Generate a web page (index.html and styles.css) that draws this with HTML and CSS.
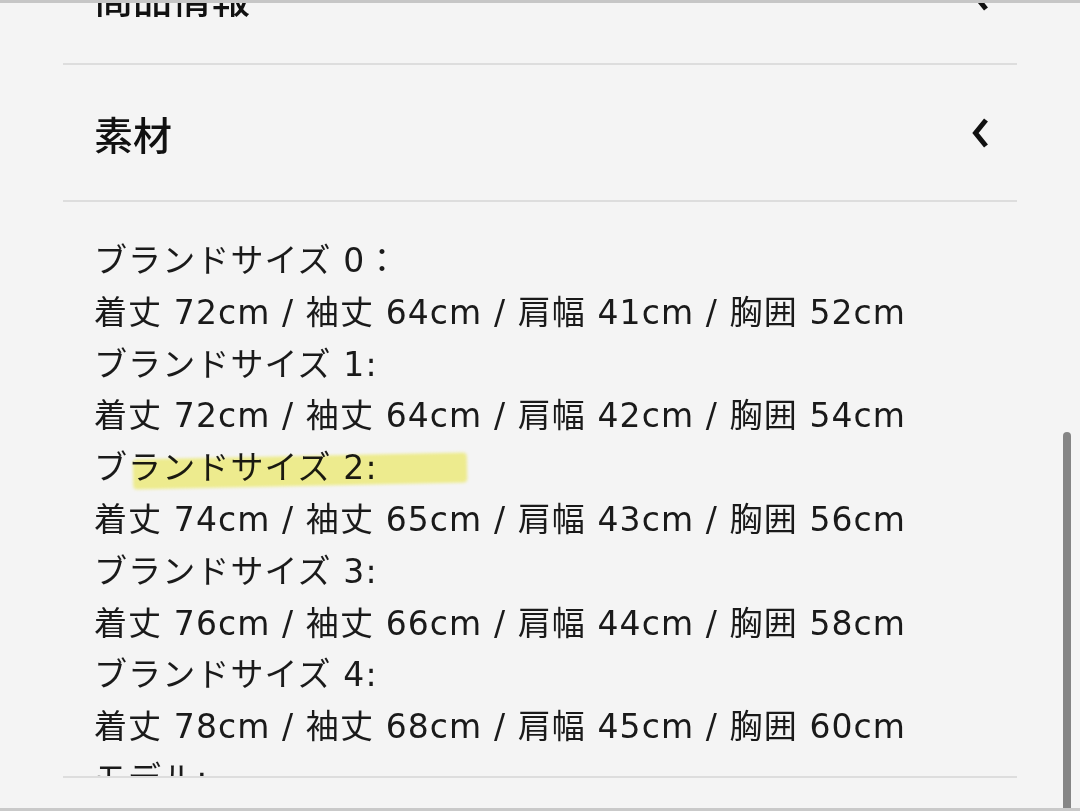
FILE: index.html
```html
<!DOCTYPE html>
<html lang="ja">
<head>
<meta charset="utf-8">
<link rel="stylesheet" href="styles.css">
</head>
<body>
<div class="screen">
  <div class="panel">
    <div class="row row-top">
      <span class="row-title">商品情報</span>
      <svg class="chev" width="18" height="32" viewBox="0 0 18 32"><path d="M14 2 L3.5 15 L14 28" fill="none" stroke="#111" stroke-width="5" stroke-linejoin="miter"/></svg>
    </div>
    <div class="row">
      <span class="row-title">素材</span>
      <svg class="chev" width="18" height="32" viewBox="0 0 18 32"><path d="M14 2 L3.5 15 L14 28" fill="none" stroke="#111" stroke-width="5" stroke-linejoin="miter"/></svg>
    </div>
    <div class="content">
      <div class="text">
        <p>ブランドサイズ 0：</p>
        <p>着丈 72cm / 袖丈 64cm / 肩幅 41cm / 胸囲 52cm</p>
        <p>ブランドサイズ 1:</p>
        <p>着丈 72cm / 袖丈 64cm / 肩幅 42cm / 胸囲 54cm</p>
        <p class="hl-line">ブランドサイズ 2:<span class="marker"></span></p>
        <p>着丈 74cm / 袖丈 65cm / 肩幅 43cm / 胸囲 56cm</p>
        <p>ブランドサイズ 3:</p>
        <p>着丈 76cm / 袖丈 66cm / 肩幅 44cm / 胸囲 58cm</p>
        <p>ブランドサイズ 4:</p>
        <p>着丈 78cm / 袖丈 68cm / 肩幅 45cm / 胸囲 60cm</p>
        <p>モデル:</p>
      </div>
    </div>
    <div class="divider"></div>
    <div class="foot"></div>
  </div>
  <div class="scrollbar"></div>
</div>
</body>
</html>
```
FILE: styles.css
```css
* { box-sizing: border-box; }
html, body { margin: 0; padding: 0; }
body {
  width: 1080px;
  height: 811px;
  overflow: hidden;
  background: #f4f4f4;
  font-family: "DejaVu Sans", "Noto Sans CJK JP", sans-serif;
  color: #1a1a1a;
}
.screen {
  position: relative;
  width: 1080px;
  height: 811px;
  border-top: 3px solid #c6c6c6;
  border-bottom: 3px solid #c9c9c9;
  overflow: hidden;
}
.panel {
  margin: -75px 63px 0;
  display: flex;
  flex-direction: column;
}
.row {
  height: 137px;
  border-bottom: 2px solid #dddddd;
  display: flex;
  align-items: center;
  justify-content: space-between;
  padding: 0 27px 0 31px;
}
.row-title {
  font-family: "Noto Sans CJK JP", sans-serif;
  font-size: 39px;
  font-weight: 500;
  color: #111;
}
.chev { display: block; margin-top: 2px; }
.content {
  height: 574px;
  overflow: hidden;
  padding: 33px 0 0 31px;
}
.text p {
  margin: 0;
  font-size: 33px;
  letter-spacing: 1.1px;
  line-height: 51.8px;
  white-space: nowrap;
  position: relative;
}
.hl-line .marker {
  position: absolute;
  left: 39px;
  top: 14px;
  width: 334px;
  height: 30px;
  background: rgba(242, 238, 60, 0.55);
  mix-blend-mode: multiply;
  transform: rotate(-1.2deg);
  filter: blur(1.5px);
  border-radius: 4px;
}
.divider {
  height: 2px;
  background: #dddddd;
}
.foot { height: 30px; }
.scrollbar {
  position: absolute;
  left: 1063px;
  top: 429px;
  width: 8px;
  height: 400px;
  border-radius: 4px;
  background: #858585;
}
```
